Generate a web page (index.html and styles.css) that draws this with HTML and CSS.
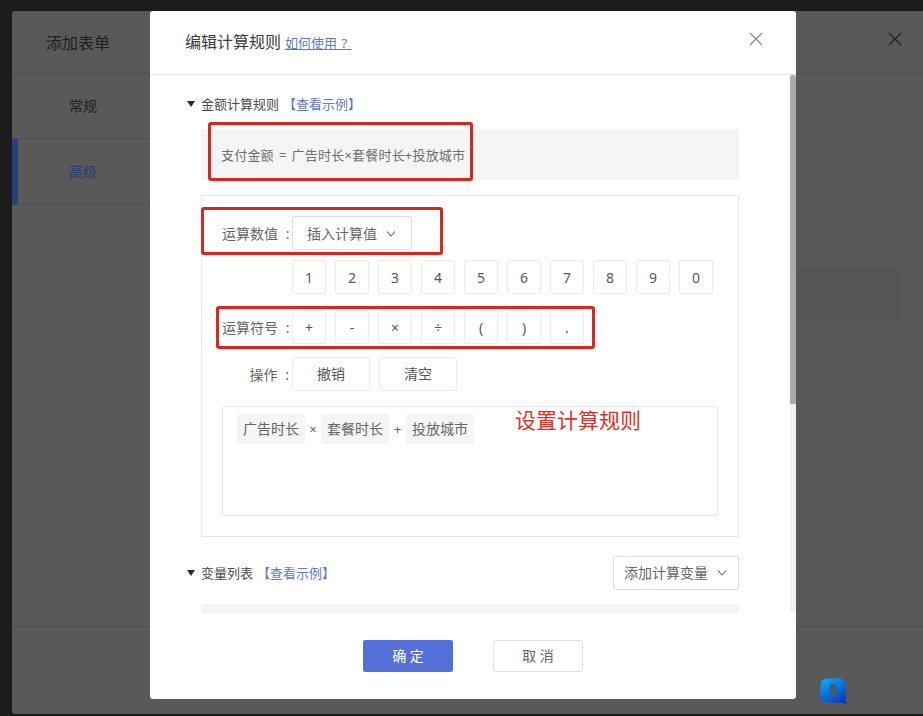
FILE: index.html
```html
<!DOCTYPE html>
<html lang="zh-CN">
<head>
<meta charset="utf-8">
<title>编辑计算规则</title>
<link rel="stylesheet" href="styles.css">
</head>
<body>
<div class="screen">
  <div class="back-panel">
    <header class="back-head">
      <span class="back-title">添加表单</span>
      <svg class="back-close" width="14" height="14" viewBox="0 0 14 14"><path d="M1 1L13 13M13 1L1 13"/></svg>
    </header>
    <div class="back-main">
      <nav class="back-nav">
        <div class="back-nav-item">常规</div>
        <div class="back-nav-item is-active">高级</div>
      </nav>
      <div class="back-content"><div class="back-block"></div></div>
    </div>
    <footer class="back-foot"></footer>
  </div>

  <section class="modal">
    <header class="modal-head">
      <h1 class="modal-title">编辑计算规则</h1>
      <a class="help-link">如何使用 ?&nbsp;</a>
      <svg class="modal-close" width="14" height="14" viewBox="0 0 14 14"><path d="M1 1L13 13M13 1L1 13"/></svg>
    </header>
    <div class="modal-body">
      <div class="scroll-content">
        <div class="section-head first">
          <i class="tri"></i><span class="section-name">金额计算规则</span><a class="example">【查看示例】</a>
        </div>
        <div class="formula"><span>支付金额 = 广告时长×套餐时长+投放城市</span></div>
        <div class="calc-box">
          <div class="row">
            <span class="row-label">运算数值 :</span>
            <div class="select select-insert"><span>插入计算值</span><svg class="chev" width="10" height="6" viewBox="0 0 10 6"><path d="M1 0.5L5 5L9 0.5"/></svg></div>
          </div>
          <div class="row row-nums">
            <span class="row-label"></span>
            <div class="keys">
              <span class="key">1</span><span class="key">2</span><span class="key">3</span><span class="key">4</span><span class="key">5</span><span class="key">6</span><span class="key">7</span><span class="key">8</span><span class="key">9</span><span class="key">0</span>
            </div>
          </div>
          <div class="row row-ops">
            <span class="row-label">运算符号 :</span>
            <div class="keys">
              <span class="key">+</span><span class="key">-</span><span class="key">×</span><span class="key">÷</span><span class="key">(</span><span class="key">)</span><span class="key">.</span>
            </div>
          </div>
          <div class="row row-actions">
            <span class="row-label">操作 :</span>
            <div class="keys">
              <span class="key key-wide">撤销</span><span class="key key-wide">清空</span>
            </div>
          </div>
          <div class="expr">
            <span class="chip">广告时长</span><span class="op op-x">×</span><span class="chip">套餐时长</span><span class="op op-plus">+</span><span class="chip">投放城市</span>
          </div>
        </div>
        <div class="section-head second">
          <div class="section-left"><i class="tri"></i><span class="section-name">变量列表</span><a class="example">【查看示例】</a></div>
          <div class="select select-add"><span>添加计算变量</span><svg class="chev" width="10" height="6" viewBox="0 0 10 6"><path d="M1 0.5L5 5L9 0.5"/></svg></div>
        </div>
        <div class="var-table"></div>
      </div>
      <div class="scrollbar"><div class="thumb"></div></div>
    </div>
    <footer class="modal-foot">
      <button class="btn btn-primary">确 定</button>
      <button class="btn btn-default">取 消</button>
    </footer>
  </section>

  <div class="mark mark-formula"></div>
  <div class="mark mark-value"></div>
  <div class="mark mark-symbol"></div>
  <div class="note">设置计算规则</div>

  <svg class="logo" width="27" height="27" viewBox="0 0 27 27">
    <defs><linearGradient id="lg" x1="0.2" y1="0" x2="0.8" y2="1"><stop offset="0" stop-color="#0aa6f8"/><stop offset="1" stop-color="#0636c4"/></linearGradient></defs>
    <path d="M7 0.5H19Q25.5 0.5 25.5 7V21L26.5 26L21 24.500H7Q0.500 24.500 0.500 18V7Q0.500 0.500 7 0.500Z" fill="url(#lg)"/>
    <rect x="10" y="6" width="6" height="13" rx="1" fill="#4a5a6a"/>
  </svg>
</div>
</body>
</html>
```
FILE: styles.css
```css
* { box-sizing: border-box; }
html, body { margin: 0; padding: 0; height: 100%; }
body {
  background: #1c1c1c;
  font-family: "Noto Sans", "Noto Sans CJK SC", sans-serif;
  color: #555;
  overflow: hidden;
}
.screen {
  position: relative;
  width: 923px;
  height: 716px;
  overflow: hidden;
  padding: 11px 0 2px 12px;
}

/* dimmed page behind the dialog */
.back-panel {
  height: 100%;
  background: #595959;
  border-radius: 3px 0 0 3px;
  display: flex;
  flex-direction: column;
}
.back-head {
  height: 63px;
  flex: none;
  border-bottom: 1px solid #4f4f4f;
  padding: 0 21px 0 34px;
  display: flex;
  align-items: center;
  justify-content: space-between;
}
.back-title { font-size: 16px; color: #1f1f1f; }
.back-close { margin-top: -6px; }
.back-close path { stroke: #222; stroke-width: 1.3; fill: none; }
.back-main { flex: 1; display: flex; }
.back-nav { width: 138px; flex: none; }
.back-nav-item {
  height: 65px;
  padding: 0 0 3px 57px;
  display: flex;
  align-items: center;
  font-size: 14px;
  color: #222;
  border-bottom: 1px solid #4f4f4f;
}
.back-nav-item.is-active {
  color: #2a3b72;
  border-left: 6px solid #27407f;
  padding: 0 0 2px 51px;
  height: 66px;
}
.back-content { flex: 1; padding: 194px 23px 0 0; }
.back-block { height: 52px; background: #565656; }
.back-foot { height: 88px; flex: none; border-top: 1px solid #4f4f4f; }

/* dialog */
.modal {
  position: absolute;
  left: 150px;
  top: 11px;
  width: 646px;
  height: 688px;
  background: #fff;
  border-radius: 3px;
  display: flex;
  flex-direction: column;
}
.modal-head {
  height: 64px;
  flex: none;
  border-bottom: 1px solid #e6e6e6;
  padding: 0 33px 4px 35px;
  display: flex;
  align-items: center;
}
.modal-title { margin: 0 0 -1px; font-size: 16px; font-weight: 400; color: #3a3a3a; }
.help-link {
  margin: 3px 0 0 4px;
  font-size: 13px;
  word-spacing: 1px;
  color: #6478bd;
  text-decoration: underline;
}
.modal-close { margin-left: auto; margin-top: -4px; }
.modal-close path { stroke: #8a8a8a; stroke-width: 1.3; fill: none; }
.modal-body { flex: 1; min-height: 0; display: flex; overflow: hidden; }
.scroll-content { flex: 1; min-width: 0; padding: 0 51px 0 37px; overflow: hidden; }
.scrollbar { width: 6px; flex: none; background: #f1f1f1; }
.thumb { height: 329px; background: #aaaaaa; border-radius: 3px 3px 0 0; }

.section-head { display: flex; align-items: center; font-size: 13px; }
.section-head.first { height: 30px; margin-top: 14px; padding-bottom: 2px; }
.section-head.second { height: 34px; margin-top: 19px; justify-content: space-between; }
.section-left { display: flex; align-items: center; padding-bottom: 2px; }
.tri {
  width: 0; height: 0;
  border-left: 4.5px solid transparent;
  border-right: 4.5px solid transparent;
  border-top: 6px solid #2b2b2b;
  margin: 2px 6px 0 0;
}
.section-name { color: #4a4a4a; }
.example { color: #6478bd; margin-left: 4px; }

.formula {
  margin: 10px 0 15px 14px;
  height: 51px;
  padding: 0 20px;
  background: #f5f5f5;
  display: flex;
  align-items: center;
  font-size: 13px;
  color: #6e6e6e;
  word-spacing: 1.5px;
  letter-spacing: 0.2px;
  white-space: pre;
}
.calc-box {
  margin-left: 14px;
  height: 342px;
  border: 1px solid #e8e8e8;
  padding: 20px;
}
.row { display: flex; align-items: center; height: 34px; }
.row-label {
  width: 70px;
  flex: none;
  text-align: right;
  padding-right: 3px;
  font-size: 14px;
  word-spacing: 4px;
  color: #666;
  white-space: nowrap;
}
.row-nums { margin-top: 10px; }
.row-ops { margin-top: 16px; }
.row-actions { margin-top: 13px; }
.select {
  display: flex;
  align-items: center;
  justify-content: space-between;
  height: 34px;
  border: 1px solid #ddd;
  border-radius: 2px;
  font-size: 14px;
  color: #666;
  background: #fff;
  padding-bottom: 1px;
}
.select-insert { width: 120px; padding-left: 14px; padding-right: 15px; }
.select-add { width: 126px; padding-left: 10px; padding-right: 11px; padding-bottom: 2px; }
.chev { margin-top: 2px; }
.chev path { stroke: #666; stroke-width: 1.1; fill: none; }
.keys { display: flex; gap: 9px; }
.key {
  width: 34px;
  height: 34px;
  border: 1px solid #ececec;
  border-radius: 2px;
  display: flex;
  align-items: center;
  justify-content: center;
  font-size: 14px;
  color: #555;
}
.key-wide { width: 78px; padding-bottom: 2px; }
.expr {
  margin-top: 15px;
  height: 110px;
  border: 1px solid #e6e6e6;
  border-radius: 2px;
  padding: 7px 14px;
  display: flex;
  align-items: flex-start;
}
.chip {
  height: 30px;
  width: 68px;
  background: #f5f5f5;
  display: flex;
  align-items: center;
  justify-content: center;
  padding-bottom: 2px;
  font-size: 14px;
  color: #666;
  border-radius: 2px;
}
.op { width: 16px; height: 30px; display: flex; align-items: center; justify-content: center; font-size: 13px; color: #666; }
.op-plus { width: 17px; }
.var-table { margin: 14px 0 0 14px; height: 40px; background: #f5f5f5; }

.modal-foot {
  height: 86px;
  flex: none;
  padding-top: 27px;
  display: flex;
  justify-content: center;
  align-items: flex-start;
  gap: 40px;
}
.btn {
  width: 90px;
  height: 32px;
  font: inherit;
  font-size: 14px;
  border-radius: 2px;
  padding: 0 0 2px;
}
.btn-primary { background: #5470d8; border: 0; color: #fff; }
.btn-default { background: #fff; border: 1px solid #e2e2e2; color: #666; }

/* annotations drawn over the screenshot */
.mark {
  position: absolute;
  border: 3px solid #d5281e;
  border-radius: 3px;
}
.mark-formula { left: 208px; top: 122px; width: 265px; height: 59px; }
.mark-value { left: 201px; top: 207px; width: 242px; height: 48px; }
.mark-symbol { left: 216px; top: 306px; width: 379px; height: 43px; }
.note {
  position: absolute;
  left: 515px;
  top: 404px;
  font-size: 21px;
  line-height: 32px;
  color: #d8352a;
}
.logo { position: absolute; left: 820px; top: 678px; }
```
